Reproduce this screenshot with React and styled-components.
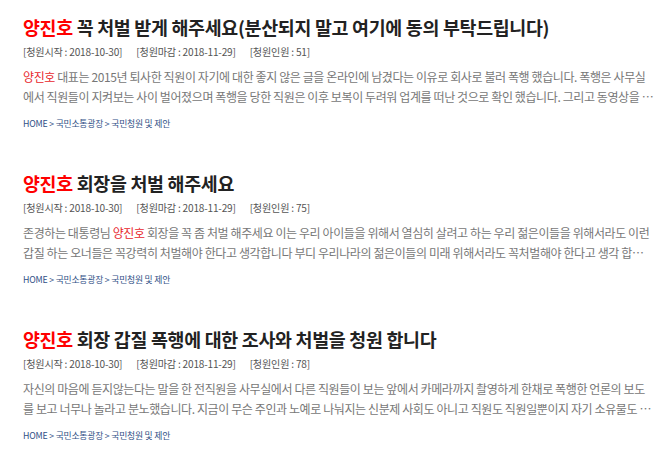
import React from "react";
import styled, { createGlobalStyle } from "styled-components";

const GlobalStyle = createGlobalStyle`
  html, body {
    margin: 0;
    padding: 0;
    background: #fff;
  }
  body {
    font-family: "Noto Sans CJK KR", "Noto Sans", sans-serif;
  }
`;

const List = styled.div`
  padding: 12px 16px 0 23px;
  display: flex;
  flex-direction: column;
  gap: 37px;
`;

const Item = styled.div`
  display: flex;
  flex-direction: column;
`;

const Title = styled.h2`
  margin: 0;
  font-size: 18.4px;
  font-weight: 700;
  line-height: 30px;
  color: #222;
  letter-spacing: -0.3px;
  white-space: nowrap;
`;

const Name = styled.span`
  color: ${(p) => (p.$small ? "#e8262b" : "#f00")};
`;

const Meta = styled.div`
  display: flex;
  gap: 14px;
  margin-top: 1px;
  font-size: 10.1px;
  line-height: 18px;
  color: #555;
  letter-spacing: -0.2px;
`;

const Body = styled.div`
  margin-top: 6px;
  font-size: 12px;
  line-height: 20px;
  color: #777;
  letter-spacing: -0.4px;
`;

const Line = styled.div`
  white-space: nowrap;
  ${(p) =>
    p.$clip &&
    `
    overflow: hidden;
    text-overflow: ellipsis;
    max-width: 634px;
  `}
`;

const Crumbs = styled.div`
  margin-top: 10px;
  font-size: 8.8px;
  line-height: 14px;
  color: #2f4f86;
  letter-spacing: -0.2px;
`;

const petitions = [
  {
    title: "꼭 처벌 받게 해주세요(분산되지 말고 여기에 동의 부탁드립니다)",
    count: 51,
    lines: [
      [<Name $small key="n">양진호</Name>, " 대표는 2015년 퇴사한 직원이 자기에 대한 좋지 않은 글을 온라인에 남겼다는 이유로 회사로 불러 폭행 했습니다. 폭행은 사무실"],
      "에서 직원들이 지켜보는 사이 벌어졌으며 폭행을 당한 직원은 이후 보복이 두려워 업계를 떠난 것으로 확인 했습니다. 그리고 동영상을 공개한 매체에 따르면",
    ],
  },
  {
    title: "회장을 처벌 해주세요",
    count: 75,
    lines: [
      ["존경하는 대통령님 ", <Name $small key="n">양진호</Name>, " 회장을 꼭 좀 처벌 해주세요 이는 우리 아이들을 위해서 열심히 살려고 하는 우리 젊은이들을 위해서라도 이런"],
      "갑질 하는 오너들은 꼭강력히 처벌해야 한다고 생각합니다 부디 우리나라의 젊은이들의 미래 위해서라도 꼭처벌해야 한다고 생각 합니다 감사합니다",
    ],
  },
  {
    title: "회장 갑질 폭행에 대한 조사와 처벌을 청원 합니다",
    count: 78,
    lines: [
      "자신의 마음에 듣지않는다는 말을 한 전직원을 사무실에서 다른 직원들이 보는 앞에서 카메라까지 촬영하게 한채로 폭행한 언론의 보도",
      "를 보고 너무나 놀라고 분노했습니다. 지금이 무슨 주인과 노예로 나눠지는 신분제 사회도 아니고 직원도 직원일뿐이지 자기 소유물도 아닙니다",
    ],
  },
];

export default function App() {
  return (
    <>
      <GlobalStyle />
      <List>
        {petitions.map((p, i) => (
          <Item key={i}>
            <Title>
              <Name>양진호</Name> {p.title}
            </Title>
            <Meta>
              <span>[청원시작 : 2018-10-30]</span>
              <span>[청원마감 : 2018-11-29]</span>
              <span>[청원인원 : {p.count}]</span>
            </Meta>
            <Body>
              <Line>{p.lines[0]}</Line>
              <Line $clip>{p.lines[1]}</Line>
            </Body>
            <Crumbs>HOME &gt; 국민소통광장 &gt; 국민청원 및 제안</Crumbs>
          </Item>
        ))}
      </List>
    </>
  );
}
